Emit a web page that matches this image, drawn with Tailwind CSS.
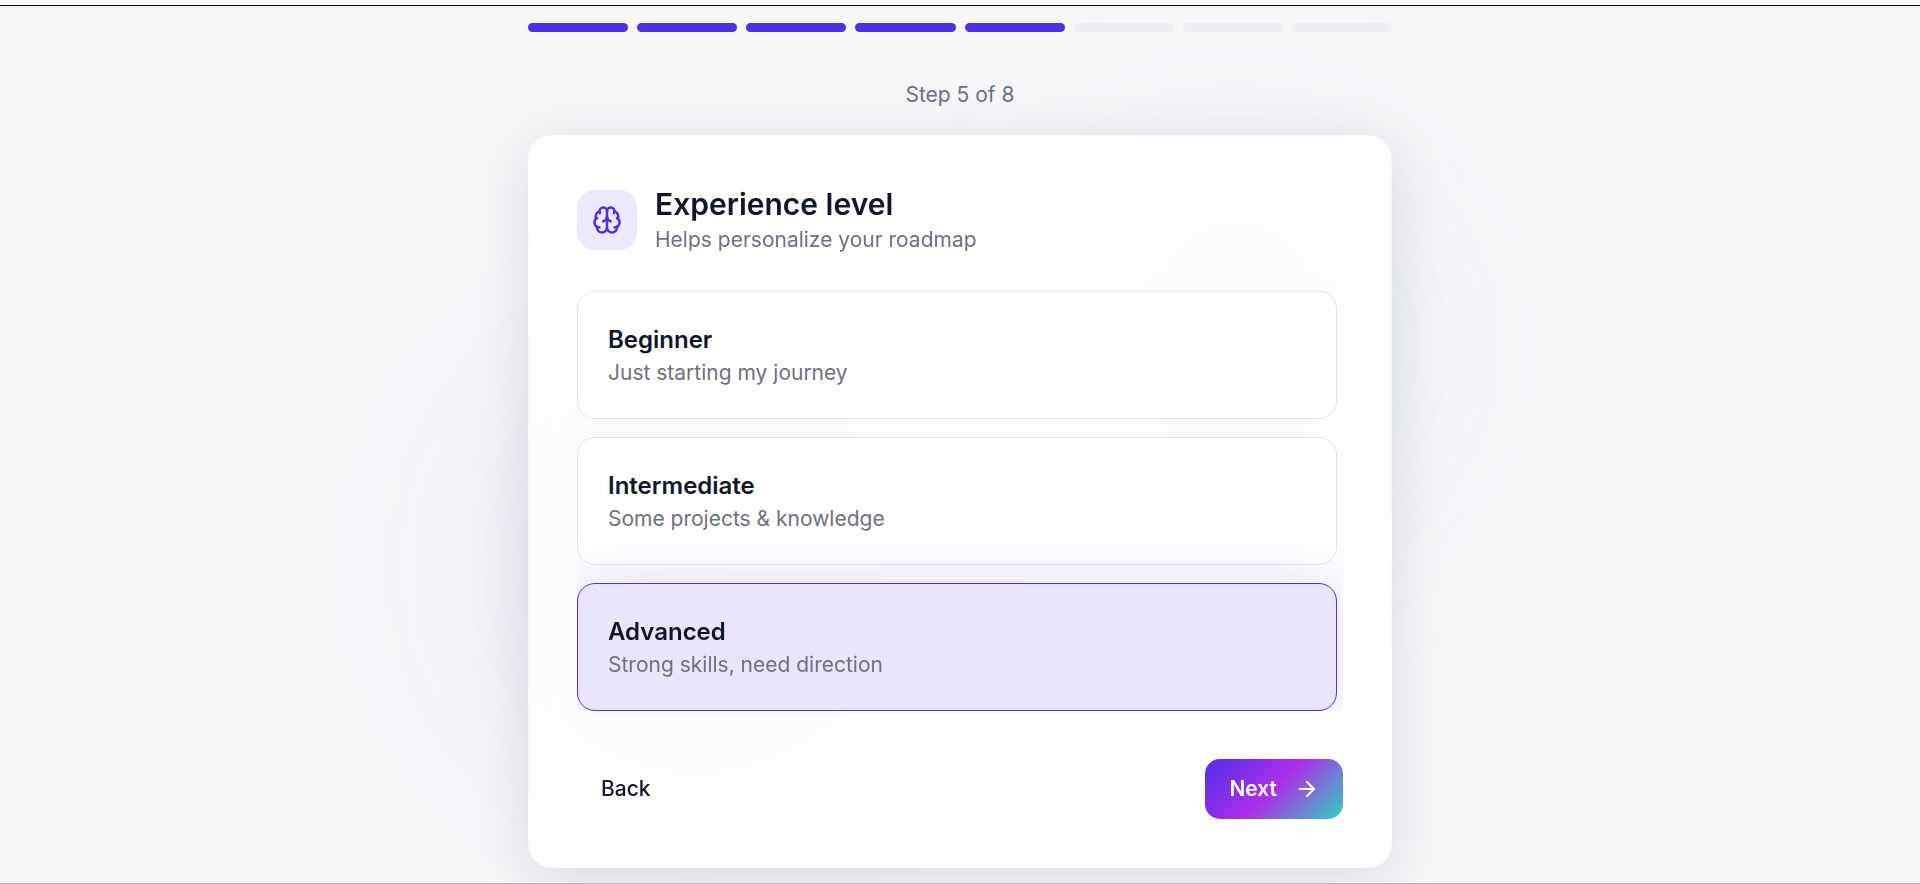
<!DOCTYPE html>
<html lang="en">

<head>
  <meta charset="UTF-8">
  <meta name="viewport" content="width=device-width, initial-scale=1.0">
  <title>Experience level</title>
  <script src="https://cdn.jsdelivr.net/npm/@tailwindcss/browser@4"></script>
</head>

<body class="font-['Inter',sans-serif] text-[#0f172a]">

  <div class="relative min-h-screen overflow-hidden bg-[#f6f7f9] border-b border-[#b0b5b9]">

    <!-- Background glows -->
    <div class="absolute left-[480px] top-[350px] size-[432px] rounded-full bg-[#4f2ee8]/6 blur-[90px]"></div>
    <div class="absolute left-[1020px] top-[130px] size-[432px] rounded-full bg-[#2dd4bf]/6 blur-[90px]"></div>

    <div class="relative h-[6px] bg-white border-b border-black"></div>

    <main class="relative mx-auto max-w-[864px] pt-[17px]">
      <div class="grid grid-cols-8 gap-[9px]" role="progressbar" aria-label="Progress" aria-valuemin="0" aria-valuemax="8" aria-valuenow="5">
        <div class="h-[9px] rounded-full bg-[#4f2ee8]"></div>
        <div class="h-[9px] rounded-full bg-[#4f2ee8]"></div>
        <div class="h-[9px] rounded-full bg-[#4f2ee8]"></div>
        <div class="h-[9px] rounded-full bg-[#4f2ee8]"></div>
        <div class="h-[9px] rounded-full bg-[#4f2ee8]"></div>
        <div class="h-[9px] rounded-full bg-[#edeef1]"></div>
        <div class="h-[9px] rounded-full bg-[#edeef1]"></div>
        <div class="h-[9px] rounded-full bg-[#edeef1]"></div>
      </div>

      <p class="mt-12 text-center text-[21px] leading-[30px] text-[#6b7280]">Step 5 of 8</p>

      <form class="mt-[25px] rounded-3xl border border-white/40 bg-white/80 bg-clip-padding p-12 shadow-[0_12px_60px_rgba(15,23,42,0.12)] backdrop-blur-xl">
        <div class="flex items-center gap-[18px]">
          <div class="flex size-[60px] items-center justify-center rounded-[18px] bg-[#4f2ee8]/10 text-[#4f2ee8]">
            <svg class="size-[30px]" viewBox="0 0 24 24" fill="none" stroke="currentColor" stroke-width="2" stroke-linecap="round" stroke-linejoin="round" aria-hidden="true">
              <path d="M12 18V5" />
              <path d="M15 13a4.17 4.17 0 0 1-3-4 4.17 4.17 0 0 1-3 4" />
              <path d="M17.598 6.5A3 3 0 1 0 12 5a3 3 0 1 0-5.598 1.5" />
              <path d="M17.997 5.125a4 4 0 0 1 2.526 5.77" />
              <path d="M18 18a4 4 0 0 0 2-7.464" />
              <path d="M19.967 17.483A4 4 0 1 1 12 18a4 4 0 1 1-7.967-.517" />
              <path d="M6 18a4 4 0 0 1-2-7.464" />
              <path d="M6.003 5.125a4 4 0 0 0-2.526 5.77" />
            </svg>
          </div>
          <div>
            <h1 id="level-title" class="text-[30px] leading-10 font-semibold">Experience level</h1>
            <p class="text-[21px] leading-8 text-[#6b7280]">Helps personalize your roadmap</p>
          </div>
        </div>

        <div role="radiogroup" aria-labelledby="level-title" class="mt-[35px] flex flex-col gap-[18px] overflow-hidden pr-[6px]">
          <label class="relative cursor-pointer rounded-[18px] border border-[#e1e3e9] bg-white p-[30px] has-checked:border-[#4f2ee8] has-checked:bg-[#e9e5fa] has-checked:shadow-[0_0_60px_rgba(79,46,232,0.15)]">
            <input type="radio" name="level" value="beginner" class="sr-only">
            <span class="block text-2xl leading-9 font-semibold">Beginner</span>
            <span class="block text-[21px] leading-[30px] text-[#6b7280]">Just starting my journey</span>
          </label>
          <label class="relative cursor-pointer rounded-[18px] border border-[#e1e3e9] bg-white p-[30px] has-checked:border-[#4f2ee8] has-checked:bg-[#e9e5fa] has-checked:shadow-[0_0_60px_rgba(79,46,232,0.15)]">
            <input type="radio" name="level" value="intermediate" class="sr-only">
            <span class="block text-2xl leading-9 font-semibold">Intermediate</span>
            <span class="block text-[21px] leading-[30px] text-[#6b7280]">Some projects &amp; knowledge</span>
          </label>
          <label class="relative cursor-pointer rounded-[18px] border border-[#e1e3e9] bg-white p-[30px] has-checked:border-[#4f2ee8] has-checked:bg-[#e9e5fa] has-checked:shadow-[0_0_60px_rgba(79,46,232,0.15)]">
            <input type="radio" name="level" value="advanced" class="sr-only" checked>
            <span class="block text-2xl leading-9 font-semibold">Advanced</span>
            <span class="block text-[21px] leading-[30px] text-[#6b7280]">Strong skills, need direction</span>
          </label>
        </div>

        <div class="mt-12 flex items-center justify-between">
          <button type="button" class="h-[60px] rounded-[15px] px-6 text-[21px] font-medium">Back</button>
          <button type="button" class="flex h-[60px] items-center gap-[18px] rounded-[15px] bg-[linear-gradient(135deg,#4f2ee8_0%,#ad2ee8_50%,#2dd4bf_100%)] px-6 text-[21px] font-semibold text-white">
            Next
            <svg class="size-6" viewBox="0 0 24 24" fill="none" stroke="currentColor" stroke-width="2" stroke-linecap="round" stroke-linejoin="round" aria-hidden="true">
              <path d="M5 12h14" />
              <path d="m12 5 7 7-7 7" />
            </svg>
          </button>
        </div>
      </form>
    </main>
  </div>

</body>

</html>
